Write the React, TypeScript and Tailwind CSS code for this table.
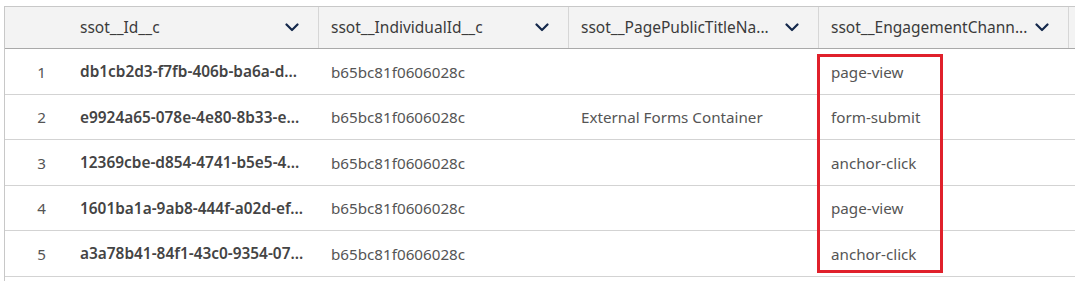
import React from "react";

const Chevron = () => (
  <svg width="14" height="9" viewBox="0 0 14 9" className="shrink-0">
    <polyline points="1.5,1.5 7,7 12.5,1.5" fill="none" stroke="#14284b" strokeWidth="2.2" strokeLinecap="round" strokeLinejoin="round" />
  </svg>
);

const headers = ["ssot__Id__c", "ssot__IndividualId__c", "ssot__PagePublicTitleNa...", "ssot__EngagementChann..."];

const rows = [
  ["db1cb2d3-f7fb-406b-ba6a-d...", "b65bc81f0606028c", "", "page-view"],
  ["e9924a65-078e-4e80-8b33-e...", "b65bc81f0606028c", "External Forms Container", "form-submit"],
  ["12369cbe-d854-4741-b5e5-4...", "b65bc81f0606028c", "", "anchor-click"],
  ["1601ba1a-9ab8-444f-a02d-ef...", "b65bc81f0606028c", "", "page-view"],
  ["a3a78b41-84f1-43c0-9354-07...", "b65bc81f0606028c", "", "anchor-click"],
];

const rowHeights = ["h-[46px]", "h-[45px]", "h-[46px]", "h-[45px]", "h-[46px]"];

export default function App() {
  return (
    <div
      className="relative w-[1075px] h-[281px] bg-white overflow-hidden pt-[6px] pl-[4px]"
      style={{ fontFamily: '"Noto Sans", "Open Sans", sans-serif' }}
    >
      <div className="border-l border-t border-[#c8c8c8] h-full">
        <div className="flex h-[42px] bg-[#f3f3f3] border-b border-[#a9a9a9]">
          <div className="w-[63px] shrink-0" />
          {headers.map((h, i) => (
            <div
              key={i}
              className={`w-[250px] shrink-0 flex items-center justify-between pl-[12px] pr-[19px] ${i > 0 ? "border-l border-[#d6d6d6]" : ""}`}
            >
              <span className="text-[15.5px] text-[#3b3b3b] whitespace-nowrap">{h}</span>
              <Chevron />
            </div>
          ))}
          <div className="flex-1 border-l border-[#d6d6d6]" />
        </div>
        {rows.map((r, ri) => (
          <div key={ri} className={`flex ${rowHeights[ri]} items-center border-b border-[#d3d3d3] pt-[1px]`}>
            <div className="w-[63px] shrink-0 text-right pr-[22px] text-[15.2px] text-[#555]">{ri + 1}</div>
            {r.map((c, ci) => (
              <div
                key={ci}
                className={`w-[250px] shrink-0 pl-[12px] whitespace-nowrap ${ci === 0 ? "font-semibold text-[15.4px] text-[#444]" : "text-[15.2px] text-[#555]"} ${ci > 0 ? "border-l border-transparent" : ""}`}
              >
                {c}
              </div>
            ))}
          </div>
        ))}
      </div>
      <div className="absolute left-[817px] top-[54px] w-[126px] h-[219px] border-[3px] border-[#e0202b]" />
    </div>
  );
}
